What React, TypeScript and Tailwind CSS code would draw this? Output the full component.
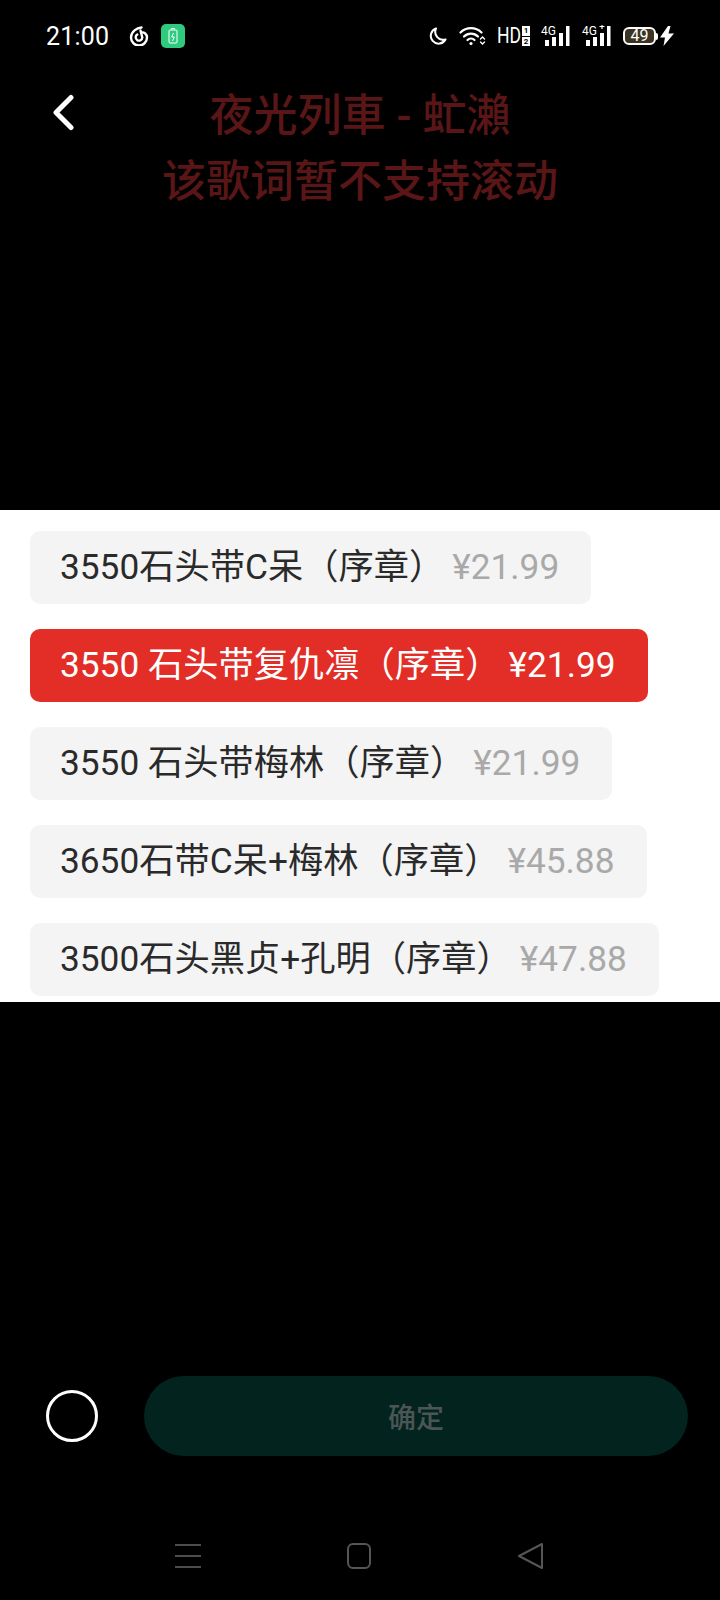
const FONT = "font-['Roboto','Noto_Sans_CJK_SC',sans-serif]";

const options = [
  { name: "3550石头带C呆（序章）", price: "¥21.99" },
  { name: "3550 石头带复仇凛（序章）", price: "¥21.99", active: true },
  { name: "3550 石头带梅林（序章）", price: "¥21.99" },
  { name: "3650石带C呆+梅林（序章）", price: "¥45.88" },
  { name: "3500石头黑贞+孔明（序章）", price: "¥47.88" },
];

function Signal({ plus }: { plus?: boolean }) {
  return (
    <svg width="30" height="22" viewBox="0 0 30 22" fill="#fff">
      <text x="0" y="10" fontSize="12" fontFamily="Roboto" fill="#fff">4G</text>
      {plus && <path d="M17.5 1.5h5M20 0v4" stroke="#fff" strokeWidth="1.2" />}
      <rect x="4" y="15" width="4" height="6" />
      <rect x="11" y="12" width="4" height="9" />
      <rect x="18" y="8" width="4" height="13" />
      <rect x="25" y="1" width="3.5" height="20" />
    </svg>
  );
}

function StatusBar() {
  return (
    <div className="flex h-[72px] shrink-0 items-center justify-between pl-[46px] pr-[46px] text-white">
      <div className="flex items-center">
        <span className="text-[25px] font-normal leading-none tracking-[0.2px]">21:00</span>
        <svg className="ml-[20px]" width="20" height="20" viewBox="0 0 20 20" fill="none" stroke="#fff" strokeWidth="2.4" strokeLinecap="round">
          <path d="M12.5 1.5C8 2 2 5.5 2 11.5a8 8 0 0 0 16 0c0-3.5-3-5.5-5.5-5" />
          <path d="M11.5 4.5c1 4 1.5 5.5 1.8 7a3.3 3.3 0 1 1-5-3" />
        </svg>
        <div className="ml-[12px] flex h-[24px] w-[24px] items-center justify-center rounded-[5px] bg-[#2ecb7f]">
          <svg width="10" height="16" viewBox="0 0 10 16" fill="none" stroke="#fff" strokeWidth="1">
            <path d="M3.5 1.5v-1h3v1" />
            <rect x="1" y="2" width="8" height="13" rx="1" />
            <path d="M5.5 5 3.7 9h2.6l-1.8 4" />
          </svg>
        </div>
      </div>
      <div className="flex items-center">
        <svg width="18" height="18" viewBox="0 0 18 18" fill="none" stroke="#fff" strokeWidth="2">
          <path d="M7 1.5a7.8 7.8 0 1 0 9.5 11A8 8 0 0 1 7 1.5Z" strokeLinejoin="round" />
        </svg>
        <svg className="ml-[12px]" width="27" height="20" viewBox="0 0 27 20" fill="none" stroke="#fff" strokeWidth="2.2" strokeLinecap="round">
          <path d="M1.5 6.5a15 15 0 0 1 21 0" />
          <path d="M5 10.5a10 10 0 0 1 14 0" />
          <path d="M8.5 14a5 5 0 0 1 7 0" />
          <circle cx="12" cy="17.5" r="1.6" fill="#fff" stroke="none" />
          <path d="m21.5 13 2-2 2 2M21.5 16l2 2 2-2" strokeWidth="1.4" />
        </svg>
        <span className="ml-[11px] w-[23px] origin-left scale-x-[0.8] text-[22px] font-normal leading-none">HD</span>
        <div className="ml-[2px] flex w-[8px] flex-col gap-[1px] text-center text-[8px] font-bold leading-[9.5px] text-black">
          <span className="bg-white">1</span>
          <span className="bg-white">2</span>
        </div>
        <div className="ml-[11px]"><Signal /></div>
        <div className="ml-[11px]"><Signal plus /></div>
        <div className="ml-[11px] flex h-[18px] w-[33px] items-center justify-center rounded-[6px] border-2 border-white bg-[#3b3420] text-[16px] font-normal leading-none">
          49
        </div>
        <span className="h-[7px] w-[2px] rounded-r-full bg-white" />
        <svg className="ml-[2px]" width="14" height="20" viewBox="0 0 14 20" fill="#fff">
          <path d="M8 0 0 11.5h5L3.5 20 14 7.5H8.5L10.5 0Z" />
        </svg>
      </div>
    </div>
  );
}

function Header() {
  return (
    <div className="grid h-[438px] shrink-0 grid-cols-[120px_1fr_120px] items-start">
      <svg className="ml-[52px] mt-[22px]" width="24" height="38" viewBox="0 0 24 38" fill="none" stroke="#fff" strokeWidth="5" strokeLinecap="round" strokeLinejoin="round">
        <path d="M19 3.5 4 18.5l15 15" />
      </svg>
      <div className="mt-[11px] text-center text-[44px] font-medium leading-[66px] whitespace-nowrap text-[#5a1616]">
        <p>夜光列車 - 虻瀨</p>
        <p>该歌词暂不支持滚动</p>
      </div>
    </div>
  );
}

function Options() {
  return (
    <div className="flex h-[492px] shrink-0 flex-col items-start gap-[25px] bg-white pl-[30px] pt-[21px]">
      {options.map((o) => (
        <div
          key={o.name}
          className={`flex h-[73px] items-center whitespace-nowrap rounded-[10px] pl-[30px] pr-[32px] text-[35.25px] ${
            o.active ? "bg-[#e22e26] text-white" : "bg-[#f4f4f4] text-[#2a2a2a]"
          }`}
        >
          <span>{o.name}</span>
          <span className={`ml-[8px] ${o.active ? "text-white" : "text-[#a9a9a9]"}`}>{o.price}</span>
        </div>
      ))}
    </div>
  );
}

function Footer() {
  return (
    <div className="flex flex-1 flex-col">
      <div className="mt-[374px] flex items-center pl-[46px]">
        <span className="h-[52px] w-[52px] rounded-full border-[3px] border-white" />
        <button className="ml-[46px] h-[80px] w-[544px] rounded-full bg-[#02231e] pt-[5px] text-[28px] font-medium text-[#4b5654]">
          确定
        </button>
      </div>
      <div className="mt-[86px] flex items-center">
        <svg className="ml-[175px]" width="26" height="26" viewBox="0 0 26 26" stroke="#4d4d4d" strokeWidth="2">
          <path d="M0 2h26M0 13h26M0 24h26" />
        </svg>
        <svg className="ml-[145px]" width="26" height="26" viewBox="0 0 26 26" fill="none" stroke="#555" strokeWidth="2">
          <rect x="2" y="1" width="22" height="24" rx="5" />
        </svg>
        <svg className="ml-[145px]" width="27" height="28" viewBox="0 0 27 28" fill="none" stroke="#555" strokeWidth="2" strokeLinejoin="round">
          <path d="M25 2 2 14l23 12Z" />
        </svg>
      </div>
    </div>
  );
}

export default function App() {
  return (
    <div className={`flex h-[1600px] w-[720px] flex-col overflow-hidden bg-black ${FONT}`}>
      <StatusBar />
      <Header />
      <Options />
      <Footer />
    </div>
  );
}
